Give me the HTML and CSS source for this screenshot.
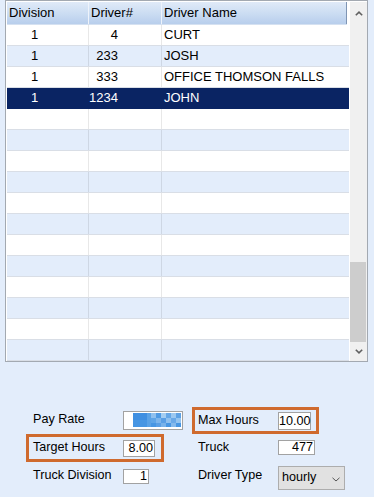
FILE: index.html
```html
<!DOCTYPE html>
<html>
<head>
<meta charset="utf-8">
<link rel="stylesheet" href="styles.css">
</head>
<body>
<div class="frame">
  <div class="grid">
    <div class="hdr">
      <div class="hc c1">Division</div>
      <div class="hc c2">Driver#</div>
      <div class="hc c3">Driver Name</div>
    </div>
    <div class="row"><div class="c c1">1</div><div class="c c2">4</div><div class="c c3">CURT</div></div>
    <div class="row alt"><div class="c c1">1</div><div class="c c2">233</div><div class="c c3">JOSH</div></div>
    <div class="row"><div class="c c1">1</div><div class="c c2">333</div><div class="c c3">OFFICE THOMSON FALLS</div></div>
    <div class="row sel"><div class="c c1">1</div><div class="c c2">1234</div><div class="c c3">JOHN</div></div>
    <div class="row"><div class="c c1"></div><div class="c c2"></div><div class="c c3"></div></div>
    <div class="row alt"><div class="c c1"></div><div class="c c2"></div><div class="c c3"></div></div>
    <div class="row"><div class="c c1"></div><div class="c c2"></div><div class="c c3"></div></div>
    <div class="row alt"><div class="c c1"></div><div class="c c2"></div><div class="c c3"></div></div>
    <div class="row"><div class="c c1"></div><div class="c c2"></div><div class="c c3"></div></div>
    <div class="row alt"><div class="c c1"></div><div class="c c2"></div><div class="c c3"></div></div>
    <div class="row"><div class="c c1"></div><div class="c c2"></div><div class="c c3"></div></div>
    <div class="row alt"><div class="c c1"></div><div class="c c2"></div><div class="c c3"></div></div>
    <div class="row"><div class="c c1"></div><div class="c c2"></div><div class="c c3"></div></div>
    <div class="row alt"><div class="c c1"></div><div class="c c2"></div><div class="c c3"></div></div>
    <div class="row"><div class="c c1"></div><div class="c c2"></div><div class="c c3"></div></div>
    <div class="row alt"><div class="c c1"></div><div class="c c2"></div><div class="c c3"></div></div>
  </div>
  <div class="vs">
    <div class="arr up"><svg width="8" height="5" viewBox="0 0 8 5"><polyline points="0.8,4.3 4,1.2 7.2,4.3" fill="none" stroke="#606060" stroke-width="1.6"/></svg></div>
    <div class="track"><div class="thumb"></div></div>
    <div class="arr down"><svg width="8" height="5" viewBox="0 0 8 5"><polyline points="0.8,0.7 4,3.8 7.2,0.7" fill="none" stroke="#606060" stroke-width="1.6"/></svg></div>
  </div>
</div>

<div class="form">
  <div class="col left">
    <div class="f">
      <span class="lbl">Pay Rate</span>
      <div class="box pay">
        <svg width="48" height="14" viewBox="0 0 48 14">
          <rect x="0" y="0" width="48" height="14" fill="#4796e3"/>
          <rect x="0" y="0" width="14" height="7" fill="#3f8fe1"/>
          <rect x="14" y="0" width="4" height="14" fill="#5aa2e6"/>
          <rect x="18" y="0" width="5" height="5" fill="#8fc0ee"/>
          <rect x="18" y="5" width="5" height="5" fill="#5fa5e7"/>
          <rect x="23" y="0" width="5" height="5" fill="#4e9ae4"/>
          <rect x="23" y="5" width="5" height="5" fill="#7db5eb"/>
          <rect x="28" y="0" width="5" height="5" fill="#a4cdf1"/>
          <rect x="33" y="0" width="5" height="5" fill="#65a7e7"/>
          <rect x="38" y="0" width="5" height="5" fill="#9cc8f0"/>
          <rect x="43" y="0" width="5" height="5" fill="#5ea2e5"/>
          <rect x="28" y="5" width="5" height="5" fill="#5a9fe5"/>
          <rect x="33" y="5" width="5" height="5" fill="#8fc0ee"/>
          <rect x="38" y="5" width="5" height="5" fill="#6aa9e8"/>
          <rect x="43" y="5" width="5" height="5" fill="#94c4ef"/>
          <rect x="28" y="10" width="5" height="4" fill="#78b2ea"/>
          <rect x="38" y="10" width="5" height="4" fill="#84b9ec"/>
          <rect x="23" y="10" width="5" height="4" fill="#5a9fe5"/>
        </svg>
      </div>
    </div>
    <div class="f hl">
      <span class="lbl">Target Hours</span>
      <div class="box tgt">8.00</div>
    </div>
    <div class="f">
      <span class="lbl">Truck Division</span>
      <div class="box tdiv">1</div>
    </div>
  </div>
  <div class="col right">
    <div class="f hl max">
      <span class="lbl">Max Hours</span>
      <div class="box mx">10.00</div>
    </div>
    <div class="f trk">
      <span class="lbl">Truck</span>
      <div class="box truck">477</div>
    </div>
    <div class="f dtype">
      <span class="lbl lbl-dt">Driver Type</span>
      <div class="select">
        <span class="sel-text">hourly</span>
        <svg width="8" height="5" viewBox="0 0 8 5"><polyline points="0.5,0.8 4,4 7.5,0.8" fill="none" stroke="#555" stroke-width="1"/></svg>
      </div>
    </div>
  </div>
</div>
</body>
</html>
```

FILE: styles.css
```css
* { box-sizing: border-box; }
html, body { margin: 0; }
body {
  background: #e3edfb;
  font-family: "Liberation Sans", Arial, sans-serif;
  color: #000;
  width: 374px;
  height: 497px;
  overflow: hidden;
}

/* grid frame */
.frame {
  display: flex;
  margin-left: 5px;
  width: 363px;
  height: 362px;
  border: 1px solid #a3a9b1;
  padding: 1px 0 0 1px;
  background: #fff;
}
.grid {
  width: 342px;
  display: flex;
  flex-direction: column;
  font-size: 13px;
}
.hdr {
  display: flex;
  flex-shrink: 0;
  width: 340px;
  height: 23px;
  border-bottom: 1px solid #d5e1f1;
  background: linear-gradient(#e0eaf8, #cadcf2 55%, #b8ceec);
}
.hc {
  height: 22px;
  line-height: 22px;
  padding-left: 2px;
  border-right: 1px solid #eef3fb;
  white-space: nowrap;
}
.c1 { width: 82px; flex-shrink: 0; }
.c2 { width: 73px; flex-shrink: 0; }
.c3 { flex: 1; }
.hdr .c3 { border-right-color: #7f95b4; }

.row {
  display: flex;
  flex-shrink: 0;
  height: 21px;
  border-bottom: 1px solid #d9dee6;
  background: #fff;
}
.row.alt { background: #e3edfb; }
.row.sel { background: #0a2463; color: #fff; border-bottom-color: #0a2463; }
.c {
  height: 20px;
  line-height: 20px;
  border-right: 1px solid rgba(0, 0, 0, 0.09);
  white-space: nowrap;
}
.row .c1 { padding-left: 24px; }
.row .c2 { text-align: right; padding-right: 43px; }
.row .c3 { border-right: 0; padding-left: 2px; }
.row.sel .c { border-right-color: transparent; }

/* scrollbar */
.vs {
  width: 18px;
  flex-shrink: 0;
  border-left: 1px solid #fff;
  background: #f0f0f0;
  display: flex;
  flex-direction: column;
}
.arr {
  display: flex;
  align-items: center;
  justify-content: center;
  flex-shrink: 0;
}
.arr.up { height: 23px; }
.arr.down { height: 19px; }
.track {
  flex: 1;
  display: flex;
  flex-direction: column;
  justify-content: flex-end;
}
.thumb { height: 80px; width: 16px; background: #cdcdcd; }

/* form */
.form {
  display: grid;
  grid-template-columns: 166px auto;
  padding-left: 26px;
  margin-top: 44px;
  font-size: 12.6px;
}
.col {
  display: flex;
  flex-direction: column;
  align-items: flex-start;
}
.f {
  display: flex;
  align-items: center;
  border: 3px solid transparent;
  height: 28px;
  flex-shrink: 0;
}
.f > * { flex-shrink: 0; }
.f.hl { border-color: #cf6a2e; }
.left .f { padding-left: 4px; }
.left .f.hl { width: 138px; }
.left .lbl { width: 90px; }
.right .f { padding-left: 3px; }
.right .f.hl { width: 127px; }
.right .lbl { width: 80px; }
.right .max { height: 27px; margin-top: 1px; }
.right .trk { height: 27px; }
.right .dtype { height: 34px; }
.lbl { padding-bottom: 2px; white-space: nowrap; }
.lbl-dt { padding-bottom: 7px; }

.box {
  background: #fff;
  border: 1px solid #a2a2a2;
  text-align: right;
  padding-right: 1px;
  white-space: nowrap;
}
.pay { width: 60px; height: 19px; padding: 1px 0 0 9px; display: flex; align-items: flex-start; }
.tgt { width: 32px; height: 17px; line-height: 15px; }
.tdiv { width: 26px; height: 15px; line-height: 13px; }
.mx { width: 33px; height: 18px; line-height: 16px; padding-right: 0; }
.truck { width: 37px; height: 15px; line-height: 13px; }

.select {
  width: 67px;
  height: 24px;
  background: #e1e1e1;
  border: 1px solid #adadad;
  display: flex;
  align-items: center;
  justify-content: space-between;
  padding: 0 4px 0 3px;
}
.sel-text { padding-bottom: 3px; }
.select svg { margin-top: 2px; }
```
